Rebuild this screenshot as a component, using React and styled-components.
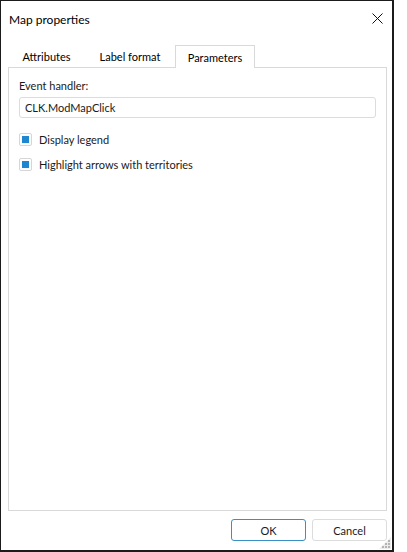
import React from "react";
import styled, { createGlobalStyle } from "styled-components";

const Global = createGlobalStyle`
  html, body { margin: 0; padding: 0; background: #fff; }
  body { font-family: Lato, "Open Sans", sans-serif; font-size: 11px; color: #000; }
`;

const Window = styled.div`
  box-sizing: border-box;
  width: 394px;
  height: 552px;
  border-style: solid;
  border-color: #1b1b1b;
  border-width: 1px 2px 2px 1px;
  background: #fff;
  display: flex;
  flex-direction: column;
  position: relative;
`;

const TitleBar = styled.div`
  height: 35px;
  display: flex;
  align-items: center;
  justify-content: space-between;
  padding: 0 5px 0 8px;
  flex: none;
`;

const Title = styled.span`
  font-size: 12px;
  color: #000;
  padding-top: 2px;
`;

const CloseBtn = styled.div`
  width: 20px;
  height: 20px;
  display: flex;
  align-items: center;
  justify-content: center;
`;

const Body = styled.div`
  flex: 1;
  display: flex;
  flex-direction: column;
  padding: 9px 5px 0 6px;
`;

const Tabs = styled.div`
  display: flex;
  align-items: flex-end;
  height: 22px;
  padding-left: 1px;
  position: relative;
  z-index: 1;
`;

const Tab = styled.div`
  box-sizing: border-box;
  width: ${(p) => p.$w}px;
  height: ${(p) => (p.$active ? "23px" : "22px")};
  display: flex;
  align-items: center;
  justify-content: center;
  color: #000;
  background: #fff;
  border: 1px solid ${(p) => (p.$active ? "#d9d9d9" : "transparent")};
  border-bottom: none;
  margin-bottom: ${(p) => (p.$active ? "-1px" : "0")};
`;

const Panel = styled.div`
  box-sizing: border-box;
  height: 444px;
  margin-left: 1px;
  width: 379px;
  border: 1px solid #d9d9d9;
  padding: 10px 10px;
  display: flex;
  flex-direction: column;
`;

const Label = styled.div`
  color: #1a1a1a;
  line-height: 16px;
`;

const Input = styled.div`
  box-sizing: border-box;
  margin-top: 3px;
  height: 21px;
  width: 357px;
  border: 1px solid #dcdcdc;
  border-radius: 3px;
  padding: 0 5px;
  display: flex;
  align-items: center;
  color: #1a1a1a;
`;

const Checks = styled.div`
  margin-top: 15px;
  display: flex;
  flex-direction: column;
  gap: 12px;
`;

const CheckRow = styled.div`
  display: flex;
  align-items: center;
  gap: 7px;
  height: 13px;
`;

const Box = styled.div`
  box-sizing: border-box;
  width: 13px;
  height: 13px;
  border: 1px solid #d6d6d6;
  border-radius: 2px;
  display: flex;
  align-items: center;
  justify-content: center;
  &::after {
    content: "";
    width: 7px;
    height: 7px;
    background: ${(p) => (p.$checked ? "#1e87cf" : "transparent")};
  }
`;

const CheckText = styled.span`
  color: #1a1a1a;
`;

const Footer = styled.div`
  display: flex;
  justify-content: flex-end;
  gap: 6px;
  padding: 8px 0 0 0;
`;

const Button = styled.div`
  box-sizing: border-box;
  width: 75px;
  height: 22px;
  border: 1px solid ${(p) => (p.$primary ? "#3b8fc7" : "#dcdcdc")};
  border-radius: 3px;
  display: flex;
  align-items: center;
  justify-content: center;
  color: #1a1a1a;
  background: #fff;
`;

const Grip = styled.svg`
  position: absolute;
  right: 1px;
  bottom: 1px;
`;

export default function App() {
  return (
    <>
      <Global />
      <Window>
        <TitleBar>
          <Title>Map properties</Title>
          <CloseBtn>
            <svg width="11" height="11" viewBox="0 0 11 11">
              <path d="M0.5 0.5 L10.5 10.5 M10.5 0.5 L0.5 10.5" stroke="#111" strokeWidth="1" />
            </svg>
          </CloseBtn>
        </TitleBar>
        <Body>
          <Tabs>
            <Tab $w={77}>Attributes</Tab>
            <Tab $w={90}>Label format</Tab>
            <Tab $active $w={80}>Parameters</Tab>
          </Tabs>
          <Panel>
            <Label>Event handler:</Label>
            <Input>CLK.ModMapClick</Input>
            <Checks>
              <CheckRow>
                <Box $checked />
                <CheckText>Display legend</CheckText>
              </CheckRow>
              <CheckRow>
                <Box $checked />
                <CheckText>Highlight arrows with territories</CheckText>
              </CheckRow>
            </Checks>
          </Panel>
          <Footer>
            <Button $primary>OK</Button>
            <Button>Cancel</Button>
          </Footer>
        </Body>
        <Grip width="12" height="12" viewBox="0 0 12 12">
          <path d="M12 0 L12 12 L0 12 Z" fill="#ececec" />
          <g fill="#b4b4b4">
            <rect x="9" y="3" width="2" height="2" />
            <rect x="6" y="6" width="2" height="2" />
            <rect x="9" y="6" width="2" height="2" />
            <rect x="3" y="9" width="2" height="2" />
            <rect x="6" y="9" width="2" height="2" />
            <rect x="9" y="9" width="2" height="2" />
          </g>
        </Grip>
      </Window>
    </>
  );
}
